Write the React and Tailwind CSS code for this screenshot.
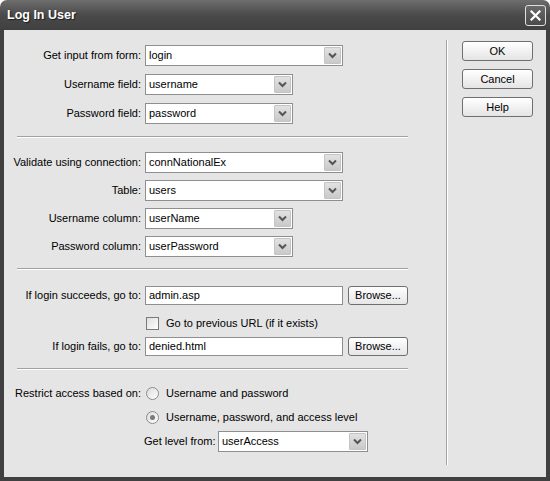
import React from "react";

function Chevron() {
  return (
    <svg width="9" height="7" viewBox="0 0 9 7">
      <path d="M1 1.5 L4.5 5 L8 1.5" stroke="#555" strokeWidth="2" fill="none" />
    </svg>
  );
}

function Select({ value, w }) {
  return (
    <div
      className={`${w} h-[21px] flex items-stretch border border-[#8f8f8f] bg-white`}
    >
      <div className="flex-1 flex items-center pl-[3px] text-[11px] text-black">{value}</div>
      <div className="w-[17px] m-[1px] flex items-center justify-center rounded-[1px] border border-[#c4c4c4] bg-gradient-to-b from-[#e2e2e2] to-[#c9c9c9]">
        <Chevron />
      </div>
    </div>
  );
}

function Row({ label, children, h = "h-[21px]" }) {
  return (
    <div className={`flex items-center ${h}`}>
      <div className="w-[141px] text-right pr-[4px] whitespace-nowrap">{label}</div>
      {children}
    </div>
  );
}

function Browse() {
  return (
    <div className="ml-[5px] w-[60px] h-[19px] flex items-center justify-center rounded-[3px] border border-[#6f6f6f] bg-gradient-to-b from-[#ffffff] to-[#e6e6e6]">
      Browse...
    </div>
  );
}

function Button({ label }) {
  return (
    <div className="w-[71px] h-[20px] flex items-center justify-center rounded-[3px] border border-[#6f6f6f] bg-gradient-to-b from-[#ffffff] to-[#e4e4e4]">
      {label}
    </div>
  );
}

function Sep() {
  return <div className="ml-[13px] w-[391px] border-t border-t-[#a2a2a2] border-b border-b-white" />;
}

function Radio({ checked }) {
  return (
    <div className="w-[13px] h-[13px] rounded-full border border-[#8c8c8c] bg-gradient-to-br from-[#dcdcdc] to-white flex items-center justify-center">
      {checked && <div className="w-[5px] h-[5px] rounded-full bg-[#7a7a7a]" />}
    </div>
  );
}

export default function App() {
  return (
    <div className="w-[550px] h-[481px] flex flex-col bg-white font-['Liberation_Sans',Arial,sans-serif] text-[11px] text-black overflow-hidden">
      <div className="h-[30px] shrink-0 rounded-t-[7px] bg-gradient-to-b from-[#6e6e6e] via-[#4a4a4a] to-[#404040] flex items-center justify-between pl-[7px] pr-[4px]">
        <div className="text-white font-bold text-[12.5px] [text-shadow:1px_1px_1px_#1a1a1a]">Log In User</div>
        <div className="w-[21px] h-[21px] rounded-[3px] border border-[#e0e0e0] bg-gradient-to-b from-[#6a6a6a] to-[#4a4a4a] flex items-center justify-center">
          <svg width="11" height="11" viewBox="0 0 11 11">
            <path d="M1.5 1.5 L9.5 9.5 M9.5 1.5 L1.5 9.5" stroke="white" strokeWidth="2.2" strokeLinecap="square" />
          </svg>
        </div>
      </div>
      <div className="flex-1 flex bg-[#e5e5e5] border-l-[4px] border-r-[4px] border-b-[4px] border-[#404040]">
        <div className="w-[442px] flex flex-col pt-[15px]">
          <div className="flex flex-col gap-[8px]">
            <Row label="Get input from form:"><Select value="login" w="w-[198px]" /></Row>
            <Row label="Username field:"><Select value="username" w="w-[148px]" /></Row>
            <Row label="Password field:"><Select value="password" w="w-[148px]" /></Row>
          </div>
          <div className="mt-[12px]"><Sep /></div>
          <div className="mt-[14px] flex flex-col gap-[7px]">
            <Row label="Validate using connection:"><Select value="connNationalEx" w="w-[198px]" /></Row>
            <Row label="Table:"><Select value="users" w="w-[198px]" /></Row>
            <Row label="Username column:"><Select value="userName" w="w-[148px]" /></Row>
            <Row label="Password column:"><Select value="userPassword" w="w-[148px]" /></Row>
          </div>
          <div className="mt-[11px]"><Sep /></div>
          <div className="mt-[16px] flex flex-col">
            <Row label="If login succeeds, go to:" h="h-[19px]">
              <div className="w-[198px] h-[19px] border border-[#8f8f8f] bg-white flex items-center pl-[3px]">admin.asp</div>
              <Browse />
            </Row>
            <div className="mt-[12px] h-[13px] flex items-center pl-[142px]">
              <div className="w-[13px] h-[13px] border border-[#7a7a7a] bg-gradient-to-br from-[#dedede] to-white" />
              <div className="ml-[7px]">Go to previous URL (if it exists)</div>
            </div>
            <div className="mt-[7px]">
              <Row label="If login fails, go to:" h="h-[19px]">
                <div className="w-[198px] h-[19px] border border-[#8f8f8f] bg-white flex items-center pl-[3px]">denied.html</div>
                <Browse />
              </Row>
            </div>
          </div>
          <div className="mt-[12px]"><Sep /></div>
          <div className="mt-[13px] flex flex-col">
            <Row label="Restrict access based on:" h="h-[20px]">
              <div className="pl-[1px] flex items-center">
                <Radio />
                <div className="ml-[7px]">Username and password</div>
              </div>
            </Row>
            <div className="mt-[4px] h-[20px] flex items-center pl-[142px]">
              <Radio checked />
              <div className="ml-[7px]">Username, password, and access level</div>
            </div>
            <div className="mt-[4px] h-[20px] flex items-center pl-[140px]">
              <div className="w-[74px]">Get level from:</div>
              <Select value="userAccess" w="w-[150px]" />
            </div>
          </div>
        </div>
        <div className="mt-[10px] h-[425px] w-[2px] border-l border-l-[#a2a2a2] border-r border-r-white" />
        <div className="pl-[14px] pt-[11px] flex flex-col gap-[8px]">
          <Button label="OK" />
          <Button label="Cancel" />
          <Button label="Help" />
        </div>
      </div>
    </div>
  );
}
